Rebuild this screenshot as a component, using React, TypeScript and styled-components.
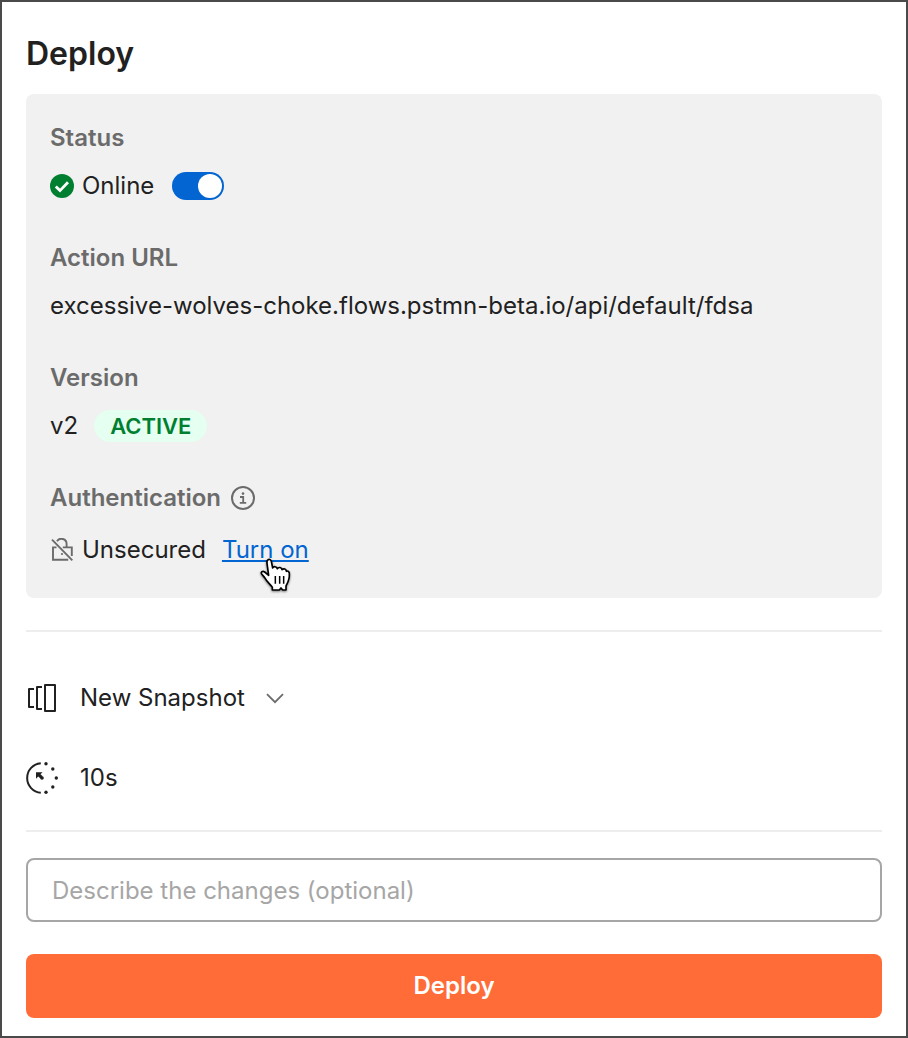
import React, { useState } from "react";
import styled, { createGlobalStyle } from "styled-components";

const GlobalStyle = createGlobalStyle`
  *, *::before, *::after { box-sizing: border-box; }
  body {
    margin: 0;
    background: #ffffff;
    color: #212121;
    font-family: Inter, "Liberation Sans", sans-serif;
    font-size: 24px;
    line-height: 32px;
  }
`;

const Dialog = styled.main`
  display: flex;
  flex-direction: column;
  padding: 32px 24px 18px;
  border: 2px solid #4a4a4a;
`;

const Title = styled.h1`
  margin: 0 0 20px;
  font-size: 32px;
  line-height: 40px;
  font-weight: 600;
`;

const Panel = styled.section`
  display: flex;
  flex-direction: column;
  gap: 40px;
  padding: 28px 24px;
  border-radius: 8px;
  background: #f1f1f1;
`;

const Field = styled.div`
  display: flex;
  flex-direction: column;
  gap: 16px;
`;

const FieldLabel = styled.h2`
  display: flex;
  align-items: center;
  gap: 10px;
  margin: 0;
  color: #6b6b6b;
  font-size: 24px;
  line-height: 32px;
  font-weight: 600;
`;

const FieldValue = styled.div<{ $tall?: boolean; $gap?: number }>`
  display: flex;
  align-items: center;
  gap: ${(p) => p.$gap ?? 16}px;
  min-height: ${(p) => (p.$tall ? 40 : 32)}px;
  overflow-wrap: anywhere;
`;

const IconText = styled.span`
  display: flex;
  align-items: center;
  gap: 8px;
`;

const Switch = styled.input`
  appearance: none;
  width: 52px;
  height: 28px;
  margin: 0;
  padding: 2px;
  border-radius: 14px;
  background: ${(p) => (p.checked ? "#0265d2" : "#a6a6a6")};
  cursor: pointer;
  display: flex;
  justify-content: ${(p) => (p.checked ? "flex-end" : "flex-start")};

  &::before {
    content: "";
    width: 24px;
    height: 24px;
    border-radius: 50%;
    background: #ffffff;
  }
`;

const Badge = styled.span`
  padding: 0 16px;
  border-radius: 16px;
  background: #e5fff1;
  color: #007f31;
  font-size: 22px;
  font-weight: 600;
`;

const TextLink = styled.a`
  position: relative;
  color: #0265d2;
  text-decoration: underline;
  text-decoration-thickness: 2px;
  text-underline-offset: 2px;
`;

const Pointer = styled.svg`
  position: absolute;
  left: 36px;
  top: 23px;
  filter: drop-shadow(0 1px 1px rgba(0, 0, 0, 0.5));
  pointer-events: none;
`;

const Divider = styled.hr`
  width: 100%;
  height: 2px;
  margin: 0;
  border: 0;
  background: #ededed;
`;

const Settings = styled.section`
  display: flex;
  flex-direction: column;
  gap: 50px;
  margin-top: 32px;
`;

const Options = styled.div`
  display: flex;
  flex-direction: column;
  gap: 48px;
  padding-bottom: 36px;
`;

const OptionRow = styled.div`
  display: flex;
  align-items: center;
  gap: 22px;
`;

const SelectBox = styled.span`
  display: grid;
  align-items: center;
  justify-items: end;

  > * { grid-area: 1 / 1; }
  > svg { pointer-events: none; }
`;

const Select = styled.select`
  appearance: none;
  padding: 0 40px 0 0;
  border: 0;
  background: transparent;
  color: inherit;
  font: inherit;
  cursor: pointer;
`;

const Form = styled.form`
  display: flex;
  flex-direction: column;
  gap: 32px;
  margin-top: 26px;
`;

const TextInput = styled.input`
  width: 100%;
  height: 64px;
  padding: 0 24px;
  border: 2px solid #a6a6a6;
  border-radius: 8px;
  background: #ffffff;
  color: #212121;
  font: inherit;

  &::placeholder { color: #a6a6a6; opacity: 1; }
`;

const DeployButton = styled.button`
  height: 64px;
  border: 0;
  border-radius: 8px;
  background: #ff6c37;
  color: #ffffff;
  font: inherit;
  font-weight: 600;
  cursor: pointer;
`;

const CheckIcon = () => (
  <svg width="24" height="24" viewBox="0 0 24 24" aria-hidden="true">
    <circle cx="12" cy="12" r="12" fill="#007f31" />
    <path d="M5.8 12.4l4.2 4.2 8-8.4" fill="none" stroke="#fff" strokeWidth="2.8" />
  </svg>
);

const InfoIcon = () => (
  <svg width="24" height="24" viewBox="0 0 24 24" fill="none" stroke="#6b6b6b" aria-hidden="true">
    <circle cx="12" cy="12" r="11" strokeWidth="2" />
    <path d="M9 11h3.2v5.4M8.8 16.8h6.4" strokeWidth="1.8" />
    <circle cx="12" cy="7.6" r="1.3" fill="#6b6b6b" stroke="none" />
  </svg>
);

const UnlockedIcon = () => (
  <svg width="24" height="24" viewBox="0 0 24 24" fill="none" stroke="#6b6b6b" strokeWidth="1.9" aria-hidden="true">
    <path d="M2 1.7L22.3 22.3" />
    <path d="M7 3.2A5.2 5.2 0 0 1 16.6 6v3.6" />
    <path d="M6.5 9.4H3v12.3h15.2M12.8 9.4h9V18" />
    <circle cx="12" cy="16" r="1.1" fill="#6b6b6b" stroke="none" />
  </svg>
);

const SnapshotIcon = () => (
  <svg width="32" height="32" viewBox="0 0 32 32" fill="none" stroke="#212121" strokeWidth="2" strokeLinejoin="round" aria-hidden="true">
    <path d="M8 7H3v18h5M16 5h-5v22h5" />
    <rect x="19" y="3" width="10" height="26" />
  </svg>
);

const TIMER_DOTS = [
  [20, 1.7],
  [26.8, 7],
  [30.3, 16],
  [26.8, 25],
  [20, 30.3],
];

const TimerIcon = () => (
  <svg width="32" height="32" viewBox="0 0 32 32" overflow="visible" fill="#212121" aria-hidden="true">
    <path d="M14.8 1.2a14.85 14.85 0 0 0 0 29.6" fill="none" stroke="#212121" strokeWidth="2" />
    {TIMER_DOTS.map(([x, y]) => (
      <circle key={`${x}-${y}`} cx={x} cy={y} r="1.7" />
    ))}
    <path d="M10 10.2h6.6l-2.1 2.1 2.2 2-2.2 2.3-2.3-2-2.2 2.1z" />
    <circle cx="16" cy="16" r="1.8" />
  </svg>
);

const ChevronIcon = () => (
  <svg width="20" height="20" viewBox="0 0 20 20" aria-hidden="true">
    <path d="M2 6.2l8 8 8-8" fill="none" stroke="#6b6b6b" strokeWidth="1.8" />
  </svg>
);

const HandPointer = () => (
  <Pointer width="34" height="37" viewBox="24 21 102 111" aria-hidden="true">
    <path
      d="M67 120v-8C60 102 52 97 46 86C42 79 38 76 35 72C31 66 38 62 44 66L56 76L51 40C49 27 61 24 64 34L68 54C71 48 80 49 82 56C86 50 95 52 96 59C101 54 109 57 109 64C114 61 119 66 118 73C119 88 115 94 108 108V120H98L93 114L88 120Z"
      fill="#fff"
      stroke="#000"
      strokeWidth="5"
      strokeLinejoin="round"
    />
    <path d="M76 78v23M89 78v23M101 78v23" stroke="#000" strokeWidth="4.5" />
  </Pointer>
);

export default function App() {
  const [online, setOnline] = useState(true);

  return (
    <>
      <GlobalStyle />
      <Dialog>
        <Title>Deploy</Title>

        <Panel>
          <Field>
            <FieldLabel>Status</FieldLabel>
            <FieldValue $gap={18}>
              <IconText>
                <CheckIcon />
                <label htmlFor="online">Online</label>
              </IconText>
              <Switch
                id="online"
                type="checkbox"
                role="switch"
                checked={online}
                onChange={(e) => setOnline(e.target.checked)}
              />
            </FieldValue>
          </Field>

          <Field>
            <FieldLabel>Action URL</FieldLabel>
            <FieldValue>excessive-wolves-choke.flows.pstmn-beta.io/api/default/fdsa</FieldValue>
          </Field>

          <Field>
            <FieldLabel>Version</FieldLabel>
            <FieldValue>
              v2
              <Badge>ACTIVE</Badge>
            </FieldValue>
          </Field>

          <Field>
            <FieldLabel>
              Authentication
              <InfoIcon />
            </FieldLabel>
            <FieldValue $tall>
              <IconText>
                <UnlockedIcon />
                Unsecured
              </IconText>
              <TextLink href="#authentication">
                Turn on
                <HandPointer />
              </TextLink>
            </FieldValue>
          </Field>
        </Panel>

        <Settings>
          <Divider />
          <Options>
            <OptionRow>
              <SnapshotIcon />
              <SelectBox>
                <Select aria-label="Snapshot" defaultValue="new">
                  <option value="new">New Snapshot</option>
                </Select>
                <ChevronIcon />
              </SelectBox>
            </OptionRow>
            <OptionRow>
              <TimerIcon />
              <span>10s</span>
            </OptionRow>
          </Options>
        </Settings>
        <Divider />

        <Form onSubmit={(e) => e.preventDefault()}>
          <TextInput
            type="text"
            aria-label="Describe the changes"
            placeholder="Describe the changes (optional)"
          />
          <DeployButton type="submit">Deploy</DeployButton>
        </Form>
      </Dialog>
    </>
  );
}
